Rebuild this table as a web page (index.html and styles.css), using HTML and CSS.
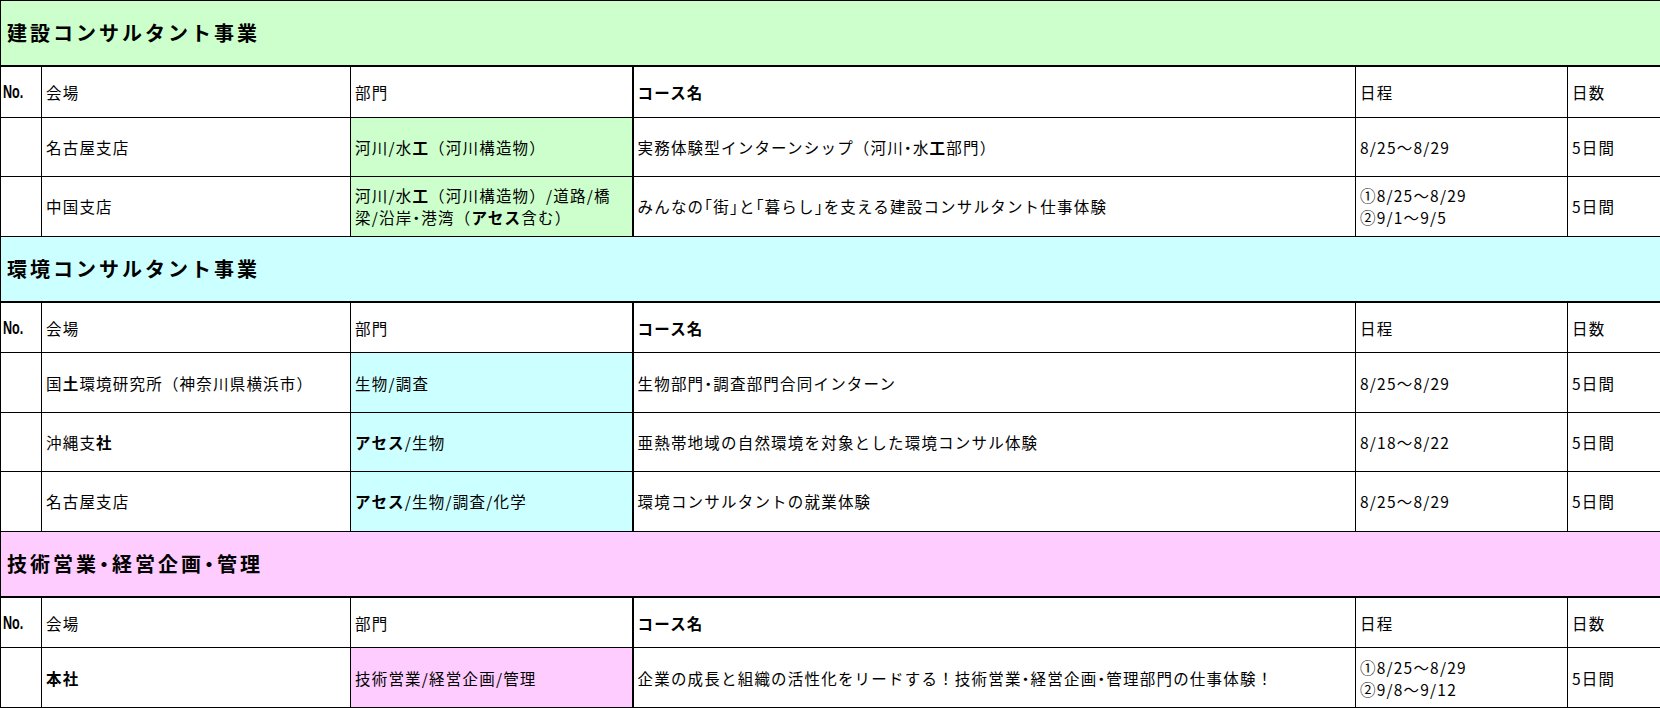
FILE: index.html
```html
<!DOCTYPE html>
<html lang="ja">
<head>
<meta charset="utf-8">
<title>インターンシップ一覧</title>
<link rel="stylesheet" href="styles.css">
</head>
<body>
<table class="sheet">
  <colgroup>
    <col class="c-no"><col class="c-venue"><col class="c-dept"><col class="c-course"><col class="c-date"><col class="c-days">
  </colgroup>
  <tbody>
    <tr class="sec green"><td colspan="6">建設コンサルタント事業</td></tr>
    <tr class="head">
      <td class="no"><span class="narrow">No.</span></td><td>会場</td><td class="dept">部門</td><td class="course b">コース名</td><td>日程</td><td>日数</td>
    </tr>
    <tr class="row">
      <td></td><td>名古屋支店</td><td class="dept fill-green">河川/水<b>工</b>（河川構造物）</td><td class="course">実務体験型インターンシップ（河川<span class="h">・</span>水<b>工</b>部門）</td><td>8/25〜8/29</td><td>5日間</td>
    </tr>
    <tr class="row r2">
      <td></td><td>中国支店</td><td class="dept fill-green two">河川/水<b>工</b>（河川構造物）/道路/橋<br>梁/沿岸<span class="h">・</span>港湾（<b>アセス</b>含む）</td><td class="course">みんなの<span class="h">「</span>街<span class="h">」</span>と<span class="h">「</span>暮らし<span class="h">」</span>を支える建設コンサルタント仕事体験</td><td class="two">①8/25〜8/29<br>②9/1〜9/5</td><td>5日間</td>
    </tr>
    <tr class="sec cyan"><td colspan="6">環境コンサルタント事業</td></tr>
    <tr class="head">
      <td class="no"><span class="narrow">No.</span></td><td>会場</td><td class="dept">部門</td><td class="course b">コース名</td><td>日程</td><td>日数</td>
    </tr>
    <tr class="row">
      <td></td><td>国<b>土</b>環境研究所（神奈川県横浜市）</td><td class="dept fill-cyan">生物/調査</td><td class="course">生物部門<span class="h">・</span>調査部門合同インターン</td><td>8/25〜8/29</td><td>5日間</td>
    </tr>
    <tr class="row">
      <td></td><td>沖縄支<b>社</b></td><td class="dept fill-cyan"><b>アセス</b>/生物</td><td class="course">亜熱帯地域の自然環境を対象とした環境コンサル体験</td><td>8/18〜8/22</td><td>5日間</td>
    </tr>
    <tr class="row">
      <td></td><td>名古屋支店</td><td class="dept fill-cyan"><b>アセス</b>/生物/調査/化学</td><td class="course">環境コンサルタントの就業体験</td><td>8/25〜8/29</td><td>5日間</td>
    </tr>
    <tr class="sec pink"><td colspan="6">技術営業<span class="h">・</span>経営企画<span class="h">・</span>管理</td></tr>
    <tr class="head">
      <td class="no"><span class="narrow">No.</span></td><td>会場</td><td class="dept">部門</td><td class="course b">コース名</td><td>日程</td><td>日数</td>
    </tr>
    <tr class="row last">
      <td></td><td><b>本社</b></td><td class="dept fill-pink">技術営業/経営企画/管理</td><td class="course">企業の成長と組織の活性化をリードする！技術営業<span class="h">・</span>経営企画<span class="h">・</span>管理部門の仕事体験！</td><td class="two">①8/25〜8/29<br>②9/8〜9/12</td><td>5日間</td>
    </tr>
  </tbody>
</table>
</body>
</html>
```

FILE: styles.css
```css
html, body {
  margin: 0;
  padding: 0;
  background: #ffffff;
}

body {
  font-family: "Noto Sans CJK JP", "Noto Sans", sans-serif;
  color: #000000;
}

.sheet {
  width: 1660px;
  height: 708px;
  border-collapse: collapse;
  table-layout: fixed;
}

.c-no { width: 41px; }
.c-venue { width: 309px; }
.c-dept { width: 282px; }
.c-course { width: 723px; }
.c-date { width: 212px; }
.c-days { width: 93px; }

.sheet td {
  border: 1px solid #000000;
  padding: 0 4px;
  font-size: 15.5px;
  letter-spacing: 1.2px;
  line-height: 22px;
  vertical-align: middle;
  white-space: nowrap;
  overflow: hidden;
}

.sheet td b {
  font-weight: 700;
}

.h {
  font-feature-settings: "halt";
}

.sec td {
  height: 64px;
  font-size: 20px;
  font-weight: 700;
  letter-spacing: 3px;
  padding-left: 6px;
  border-bottom: 2px solid #000000;
}

.green td { background: #ccffcc; }
.cyan td { background: #ccffff; }
.pink td { background: #ffccff; }

.head td {
  height: 49px;
  background: #ffffff;
}

.row td {
  height: 58px;
}

.sheet td.course {
  border-left: 2px solid #000000;
}

.sheet td.b {
  font-weight: 700;
}

.sheet td.no {
  font-family: "Liberation Sans", sans-serif;
  font-weight: 700;
  font-size: 18px;
  letter-spacing: 0;
  padding-left: 2px;
}

.narrow {
  display: inline-block;
  transform: scaleX(0.7);
  transform-origin: left center;
}

.fill-green { background: #ccffcc; }
.fill-cyan { background: #ccffff; }
.fill-pink { background: #ffccff; }

.sheet td.two {
  line-height: 22px;
}
```
